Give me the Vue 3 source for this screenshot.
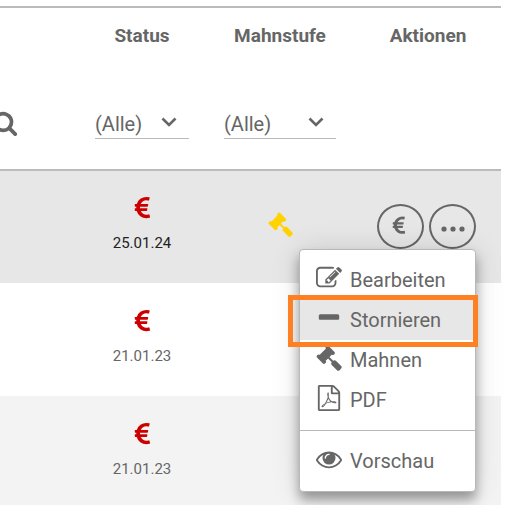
<template>
  <main class="page">
    <table class="invoices">
      <colgroup>
        <col />
        <col class="col-status" />
        <col class="col-level" />
        <col class="col-actions" />
      </colgroup>
      <thead>
        <tr class="titles">
          <th></th>
          <th scope="col">Status</th>
          <th scope="col">Mahnstufe</th>
          <th scope="col">Aktionen</th>
        </tr>
        <tr class="filters">
          <td>
            <button class="search" aria-label="Suchen">
              <svg viewBox="0 0 1792 1792"><path :d="icons.search" /></svg>
            </button>
          </td>
          <td>
            <div class="select status-select">
              <select v-model="statusFilter" aria-label="Status">
                <option>(Alle)</option>
              </select>
              <svg viewBox="0 0 16 10"><path d="M1.5 1.5L8 8l6.5-6.5" /></svg>
            </div>
          </td>
          <td>
            <div class="select level-select">
              <select v-model="levelFilter" aria-label="Mahnstufe">
                <option>(Alle)</option>
              </select>
              <svg viewBox="0 0 16 10"><path d="M1.5 1.5L8 8l6.5-6.5" /></svg>
            </div>
          </td>
          <td></td>
        </tr>
      </thead>
      <tbody>
        <tr v-for="row in rows" :key="row.id" :class="{ active: row.id === activeId }">
          <td></td>
          <td>
            <svg class="euro" viewBox="0 0 1792 1792"><path :d="icons.euro" /></svg>
            <div class="date">{{ row.date }}</div>
          </td>
          <td>
            <svg v-if="row.reminder" class="gavel" viewBox="0 0 1792 1792">
              <path :d="icons.gavel" />
            </svg>
          </td>
          <td class="actions-cell">
            <div v-if="row.id === activeId" class="actions">
              <button class="round" aria-label="Bezahlen">
                <svg class="small-euro" viewBox="0 0 1792 1792"><path :d="icons.euro" /></svg>
              </button>
              <button class="round" aria-label="Mehr" @click="menuOpen = !menuOpen">
                <svg class="dots" viewBox="0 0 24 24">
                  <circle cx="3" cy="15" r="2.6" />
                  <circle cx="12" cy="15" r="2.6" />
                  <circle cx="21" cy="15" r="2.6" />
                </svg>
              </button>
              <div v-if="menuOpen" class="menu">
                <template v-for="item in menu" :key="item.label">
                  <hr v-if="item.divider" />
                  <button class="item" :class="{ marked: item.marked }">
                    <svg viewBox="0 0 1792 1792"><path :d="icons[item.icon]" /></svg>
                    <span>{{ item.label }}</span>
                  </button>
                </template>
              </div>
            </div>
          </td>
        </tr>
      </tbody>
    </table>
  </main>
</template>

<script setup>
import { ref } from "vue"

const statusFilter = ref("(Alle)")
const levelFilter = ref("(Alle)")
const activeId = ref(1)
const menuOpen = ref(true)

const rows = [
  { id: 1, date: "25.01.24", reminder: true },
  { id: 2, date: "21.01.23" },
  { id: 3, date: "21.01.23" },
]

const menu = [
  { label: "Bearbeiten", icon: "edit" },
  { label: "Stornieren", icon: "minus", marked: true },
  { label: "Mahnen", icon: "gavel" },
  { label: "PDF", icon: "pdf" },
  { label: "Vorschau", icon: "eye", divider: true },
]

const icons = {
  search:
    "M1216 832q0-185-131.5-316.5t-316.5-131.5-316.5 131.5-131.5 316.5 131.5 316.5 316.5 131.5 316.5-131.5 131.5-316.5zm512 832q0 52-38 90t-90 38q-54 0-90-38l-343-342q-179 124-399 124-143 0-273.5-55.5t-225-150-150-225-55.5-273.5 55.5-273.5 150-225 225-150 273.5-55.5 273.5 55.5 225 150 150 225 55.5 273.5q0 220-124 399l343 343q37 37 37 90z",
  euro:
    "M1360 1307l35 159q3 12-3 22.5t-17 14.5l-5 1q-4 2-10.5 3.5t-16 4.5-21.5 5.5-25.5 5-30 5-33.5 4.5-36.5 3-38.5 1q-234 0-409-130.5t-238-351.5h-95q-13 0-22.5-9.5t-9.5-22.5v-113q0-13 9.5-22.5t22.5-9.5h66q-2-57 1-105h-67q-14 0-23-9t-9-23v-114q0-14 9-23t23-9h98q67-210 243.5-338t400.5-128q102 0 194 23 11 3 20 15 6 11 3 24l-43 159q-3 13-14 19.5t-24 2.5l-4-1q-4-1-11.5-2.5l-17.5-3.5-22.5-3.5-26-3-29-2.5-29.5-1q-126 0-226 64t-150 176h468q16 0 25 12 10 12 7 26l-24 114q-5 26-32 26h-488q-3 37 0 105h459q15 0 25 12 9 12 6 27l-24 112q-2 11-11 18.5t-20 7.5h-387q48 117 149.5 185.5t228.5 68.5q18 0 36-1.5t33.5-3.5 29.5-4.5 24.5-5 18.5-4.5l12-3 5-2q13-5 26 2 12 7 15 21z",
  gavel:
    "M1771 1536q0 53-37 90l-107 108q-39 37-91 37-53 0-90-37l-363-364q-38-36-38-90 0-53 43-96l-256-256-126 126q-14 14-34 14t-34-14q2 2 12.5 12t12.5 13 10 11.5 10 13.5 6 13.5 5.5 16.5 1.5 18q0 38-28 68-3 3-16.5 18t-19 20.5-18.5 16.5-22 15.5-22 9-26 4.5q-40 0-68-28l-408-408q-28-28-28-68 0-13 4.5-26t9-22 15.5-22 16.5-18.5 20.5-19 18-16.5q30-28 68-28 10 0 18 1.5t16.5 5.5 13.5 6 13.5 10 11.5 10 13 12.5 12 12.5q-14-14-14-34t14-34l348-348q14-14 34-14t34 14q-2-2-12.5-12t-12.5-13-10-11.5-10-13.5-6-13.5-5.5-16.5-1.5-18q0-38 28-68 3-3 16.5-18t19-20.5 18.5-16.5 22-15.5 22-9 26-4.5q40 0 68 28l408 408q28 28 28 68 0 13-4.5 26t-9 22-15.5 22-16.5 18.5-20.5 19-18 16.5q-30 28-68 28-10 0-18-1.5t-16.5-5.5-13.5-6-13.5-10-11.5-10-13-12.5-12-12.5q14 14 14 34t-14 34l-126 126 256 256q43-43 96-43 52 0 91 37l363 363q37 39 37 91z",
  edit:
    "M888 1184l116-116-152-152-116 116v56h96v96h56zm440-720q-16-16-33 1l-350 350q-17 17-1 33t33-1l350-350q17-17 1-33zm80 594v190q0 119-84.5 203.5t-203.5 84.5h-832q-119 0-203.5-84.5t-84.5-203.5v-832q0-119 84.5-203.5t203.5-84.5h832q63 0 117 25 15 7 18 23 3 17-9 29l-49 49q-14 14-32 8-23-6-45-6h-832q-66 0-113 47t-47 113v832q0 66 47 113t113 47h832q66 0 113-47t47-113v-126q0-13 9-22l64-64q15-15 35-7t20 29zm-96-738l288 288-672 672h-288v-288zm444 132l-92 92-288-288 92-92q28-28 68-28t68 28l152 152q28 28 28 68t-28 68z",
  minus:
    "M1600 736v192q0 40-28 68t-68 28h-1216q-40 0-68-28t-28-68v-192q0-40 28-68t68-28h1216q40 0 68 28t28 68z",
  pdf:
    "M1596 380q28 28 48 76t20 88v1152q0 40-28 68t-68 28h-1344q-40 0-68-28t-28-68v-1600q0-40 28-68t68-28h896q40 0 88 20t76 48zm-444-244v376h376q-10-29-22-41l-313-313q-12-12-41-22zm384 1528v-1024h-416q-40 0-68-28t-28-68v-416h-768v1536h1280zm-514-593q33 26 84 56 59-7 117-7 147 0 177 49 16 22 2 52 0 1-1 2l-2 2v1q-6 38-71 38-48 0-115-20t-130-53q-221 24-392 83-153 262-242 262-15 0-28-7l-24-12q-1-1-6-5-10-10-6-36 9-40 56-91.5t132-96.5q14-9 23 6 2 2 2 4 52-85 107-197 68-136 104-262-24-82-30.5-159.5t6.5-127.5q11-40 42-40h22q23 0 35 15 18 21 9 68-2 6-4 8 1 3 1 8v30q-2 123-14 192 55 164 146 238zm-576 411q52-24 137-158-51 40-87.5 84t-49.5 74zm398-920q-15 42-2 132 1-7 7-44 0-3 7-43 1-4 4-8-1-1-1-2t-1-2-1-3q-1-22-13-36 0 1-1 2v2zm-124 661q135-54 284-81-2-1-13-9.5t-16-13.5q-76-67-127-176-27 86-83 197-30 56-45 83zm646-16q-24-24-140-24 76 28 124 28 14 0 18-1 0-1-2-3z",
  eye:
    "M1664 960q-152-236-381-353 61 104 61 225 0 185-131.5 316.5t-316.5 131.5-316.5-131.5-131.5-316.5q0-121 61-225-229 117-381 353 133 205 333.5 326.5t434.5 121.5 434.5-121.5 333.5-326.5zm-720-384q0-20-14-34t-34-14q-125 0-214.5 89.5t-89.5 214.5q0 20 14 34t34 14 34-14 14-34q0-86 61-147t147-61q20 0 34-14t14-34zm848 384q0 34-20 69-140 230-376.5 368.5t-499.5 138.5-499.5-139-376.5-368q-20-35-20-69t20-69q140-229 376.5-368t499.5-139 499.5 139 376.5 368q20 35 20 69z",
}
</script>

<style>
html,
body {
  background: #fff;
  overflow: hidden;
}
</style>

<style scoped>
.page {
  padding: 6px 7px 0 0;
  font-family: Roboto, "Liberation Sans", sans-serif;
  color: #666;
}

svg {
  display: block;
  fill: currentColor;
}

button {
  padding: 0;
  border: none;
  background: none;
  color: inherit;
  font: inherit;
  cursor: pointer;
}

.invoices {
  width: 100%;
  table-layout: fixed;
  border-collapse: separate;
  border-spacing: 0;
  border-top: 2px solid #bbb;
}

.col-status {
  width: 126px;
}

.col-level {
  width: 150px;
}

.col-actions {
  width: 146px;
}

th,
td {
  padding: 0;
}

.titles th {
  height: 54px;
  font-size: 19px;
  font-weight: 700;
}

.filters td {
  height: 77px;
  padding-bottom: 30px;
  border-bottom: 2px solid #bbb;
  vertical-align: bottom;
}

.search {
  display: block;
  margin: 0 0 3px -8px;
}

.search svg {
  width: 26px;
  height: 26px;
}

.select {
  position: relative;
  margin: 0 auto;
}

.status-select {
  width: 94px;
}

.level-select {
  width: 112px;
}

select {
  display: block;
  width: 100%;
  height: 30px;
  padding: 0;
  border: none;
  border-bottom: 1px solid #bbb;
  border-radius: 0;
  background: none;
  appearance: none;
  color: inherit;
  font: inherit;
  font-size: 20px;
}

.select svg {
  position: absolute;
  top: 8px;
  right: 12px;
  width: 16px;
  height: 10px;
  fill: none;
  stroke: currentColor;
  stroke-width: 2.6;
  pointer-events: none;
}

tbody td {
  height: 113px;
}

tbody .active td {
  height: 112px;
}

tbody tr:nth-child(odd) {
  background: #f3f3f3;
}

tbody tr.active {
  background: #e7e7e7;
}

.euro {
  width: 27px;
  height: 27px;
  margin: 0 auto 11px;
  color: #c00;
}

.date {
  margin-bottom: 6px;
  font-size: 15px;
  line-height: 20px;
  text-align: center;
}

.active .date {
  color: #222;
}

.gavel {
  width: 25px;
  height: 25px;
  margin: 0 auto 6px;
  color: #ffd200;
}

.actions-cell {
  padding-right: 3px;
}

.actions {
  position: relative;
  display: flex;
  gap: 5px;
  width: 99px;
  margin: 0 auto 2px;
}

.round {
  display: flex;
  align-items: center;
  justify-content: center;
  width: 47px;
  height: 45px;
  border: 2px solid #666;
  border-radius: 50%;
}

.small-euro {
  width: 22px;
  height: 22px;
  margin-right: 4px;
}

.dots {
  width: 24px;
  height: 24px;
}

.menu {
  position: absolute;
  top: 100%;
  right: 0;
  z-index: 1;
  width: 177px;
  box-sizing: border-box;
  padding: 10px 0;
  border: 1px solid #b8b8b8;
  border-radius: 4px;
  background: #fff;
  box-shadow: 0 8px 12px rgba(0, 0, 0, 0.35), 0 0 30px rgba(0, 0, 0, 0.12);
}

.menu hr {
  height: 1px;
  margin: 10px 0;
  border: none;
  background: #b8b8b8;
}

.item {
  position: relative;
  display: flex;
  align-items: center;
  gap: 8px;
  width: 100%;
  height: 40px;
  padding: 0 16px;
  font-size: 20px;
}

.item svg {
  width: 26px;
  height: 26px;
  margin-bottom: 4px;
}

.marked {
  background: #e7e7e7;
}

/* frame drawn around the entry being explained */
.marked::after {
  content: "";
  position: absolute;
  inset: -5px -3px -7px -12px;
  z-index: 1;
  border: 5px solid #ff8023;
}
</style>
